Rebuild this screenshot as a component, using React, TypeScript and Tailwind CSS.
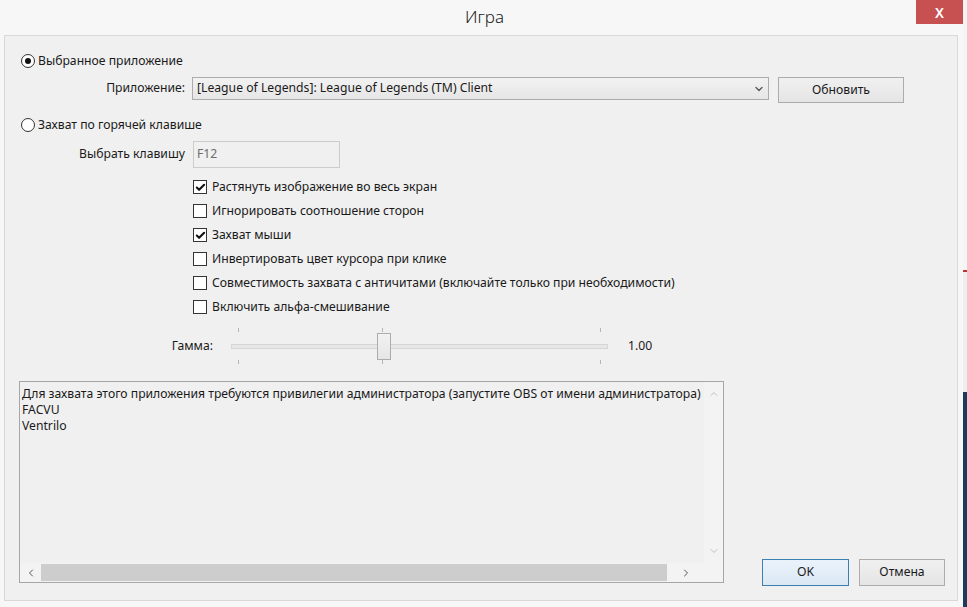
import { Check, ChevronDown, ChevronLeft, ChevronRight, ChevronUp } from "lucide-react";

const CHECKS = [
  { label: "Растянуть изображение во весь экран", on: true },
  { label: "Игнорировать соотношение сторон", on: false },
  { label: "Захват мыши", on: true },
  { label: "Инвертировать цвет курсора при клике", on: false },
  { label: "Совместимость захвата с античитами (включайте только при необходимости)", on: false },
  { label: "Включить альфа-смешивание", on: false },
];

function Radio({ on, label }: { on: boolean; label: string }) {
  return (
    <div className="flex items-center h-[16px]">
      <span className="w-[14px] h-[14px] rounded-full border border-[#333] bg-white flex items-center justify-center">
        {on && <span className="w-[6px] h-[6px] rounded-full bg-[#111]" />}
      </span>
      <span className="ml-[3px]">{label}</span>
    </div>
  );
}

function Checkbox({ on, label }: { on: boolean; label: string }) {
  return (
    <div className="flex items-center h-[24px]">
      <span className="w-[14px] h-[14px] border border-[#333] bg-white flex items-center justify-center">
        {on && <Check size={11} strokeWidth={4.5} className="text-[#111]" />}
      </span>
      <span className="ml-[5px]">{label}</span>
    </div>
  );
}

function Ticks() {
  return (
    <div className="flex h-[4px]">
      <span className="ml-[7px] w-px h-full bg-[#b5b5b5]" />
      <span className="ml-[143px] w-px h-full bg-[#b5b5b5]" />
      <span className="ml-[217px] w-px h-full bg-[#b5b5b5]" />
    </div>
  );
}

export default function App() {
  return (
    <div
      className="w-[967px] h-[607px] flex bg-[#f7f7f7] overflow-hidden text-[12.2px] text-[#1a1a1a]"
      style={{ fontFamily: '"Noto Sans", "DejaVu Sans", sans-serif' }}
    >
      <div className="w-[963px] flex flex-col">
        {/* title bar */}
        <div className="h-[35px] relative flex items-center justify-center">
          <span className="text-[17px] font-light text-[#222] -mt-[2px] ml-[6px]">Игра</span>
          <div className="absolute right-0 top-0 w-[47px] h-[24px] bg-[#c75050] flex items-center justify-center text-white text-[14px] font-semibold">
            X
          </div>
        </div>

        {/* client area */}
        <div className="ml-[4px] mr-[5px] h-[566px] border border-[#d9d9d9] bg-[#f0f0f0] flex flex-col pl-[16px]">
          <div className="mt-[17px]">
            <Radio on label="Выбранное приложение" />
          </div>

          <div className="flex items-start mt-[8px] -ml-[16px]">
            <div className="w-[180px] h-[22px] flex items-center justify-end">Приложение:</div>
            <div className="ml-[7px] w-[577px] h-[23px] border border-[#acacac] bg-gradient-to-b from-[#f2f2f2] to-[#e6e6e6] flex items-center pl-[4px] pr-[3px]">
              <span className="flex-1">[League of Legends]: League of Legends (TM) Client</span>
              <ChevronDown size={12} strokeWidth={2.5} className="text-[#555]" />
            </div>
            <div className="ml-[9px] w-[126px] h-[26px] border border-[#acacac] bg-gradient-to-b from-[#f0f0f0] to-[#e5e5e5] flex items-center justify-center">
              Обновить
            </div>
          </div>

          <div className="mt-[14px]">
            <Radio on={false} label="Захват по горячей клавише" />
          </div>

          <div className="flex items-center mt-[8px] -ml-[16px]">
            <div className="w-[180px] flex justify-end">Выбрать клавишу</div>
            <div className="ml-[8px] w-[147px] h-[27px] border border-[#cccccc] bg-[#f0f0f0] flex items-center pl-[3px] text-[#6d6d6d]">
              F12
            </div>
          </div>

          <div className="mt-[7px] ml-[172px] flex flex-col">
            {CHECKS.map((c) => (
              <Checkbox key={c.label} on={c.on} label={c.label} />
            ))}
          </div>

          <div className="flex items-center mt-[8px] -ml-[16px] h-[38px]">
            <div className="w-[208px] flex justify-end">Гамма:</div>
            <div className="ml-[18px] w-[377px] h-[36px] flex flex-col justify-between">
              <Ticks />
              <div className="relative h-[5px] border border-[#d6d6d6] bg-[#e7e7e7]">
                <div className="absolute left-[145px] -top-[12px] w-[14px] h-[27px] border border-[#acacac] bg-gradient-to-b from-[#f2f2f2] to-[#e6e6e6]" />
              </div>
              <Ticks />
            </div>
            <div className="ml-[20px]">1.00</div>
          </div>

          <div className="flex items-end mt-[16px] -ml-[2px]">
            {/* log box */}
            <div className="w-[705px] h-[202px] mb-[3px] border border-[#a6a6a6] bg-[#f0f0f0] flex flex-col">
              <div className="flex-1 flex min-h-0">
                <div className="flex-1 pl-[2px] pt-[4px] leading-[16px] overflow-hidden whitespace-nowrap">
                  <div>
                    Для захвата этого приложения требуются привилегии администратора (запустите OBS от имени администратора)
                  </div>
                  <div>FACVU</div>
                  <div>Ventrilo</div>
                </div>
                <div className="w-[19px] bg-[#f3f3f3] flex flex-col items-center justify-between py-[6px] text-[#b0b0b0]">
                  <ChevronUp size={12} strokeWidth={1.5} />
                  <ChevronDown size={12} strokeWidth={1.5} />
                </div>
              </div>
              <div className="h-[19px] flex bg-[#f3f3f3]">
                <div className="w-[21px] flex items-center justify-center text-[#555]">
                  <ChevronLeft size={12} strokeWidth={2} />
                </div>
                <div className="w-[626px] my-[1px] bg-[#cdcdcd]" />
                <div className="flex-1 flex items-center justify-center text-[#555]">
                  <ChevronRight size={12} strokeWidth={2} />
                </div>
                <div className="w-[19px]" />
              </div>
            </div>

            <div className="ml-[38px] w-[87px] h-[27px] border border-[#3c7fb1] bg-gradient-to-b from-[#eaf3fb] to-[#dbe8f4] flex items-center justify-center">
              OK
            </div>
            <div className="ml-[10px] w-[86px] h-[27px] border border-[#acacac] bg-gradient-to-b from-[#f0f0f0] to-[#e5e5e5] flex items-center justify-center">
              Отмена
            </div>
          </div>
        </div>
      </div>

      {/* desktop sliver behind the window */}
      <div className="flex-1 flex flex-col bg-white">
        <div className="h-[270px] bg-[#f4f4f4]" />
        <div className="h-[2px] bg-[#b33]" />
        <div className="h-[120px] bg-[#eeeeee]" />
        <div className="flex-1 bg-[#1f3a56]" />
      </div>
    </div>
  );
}
